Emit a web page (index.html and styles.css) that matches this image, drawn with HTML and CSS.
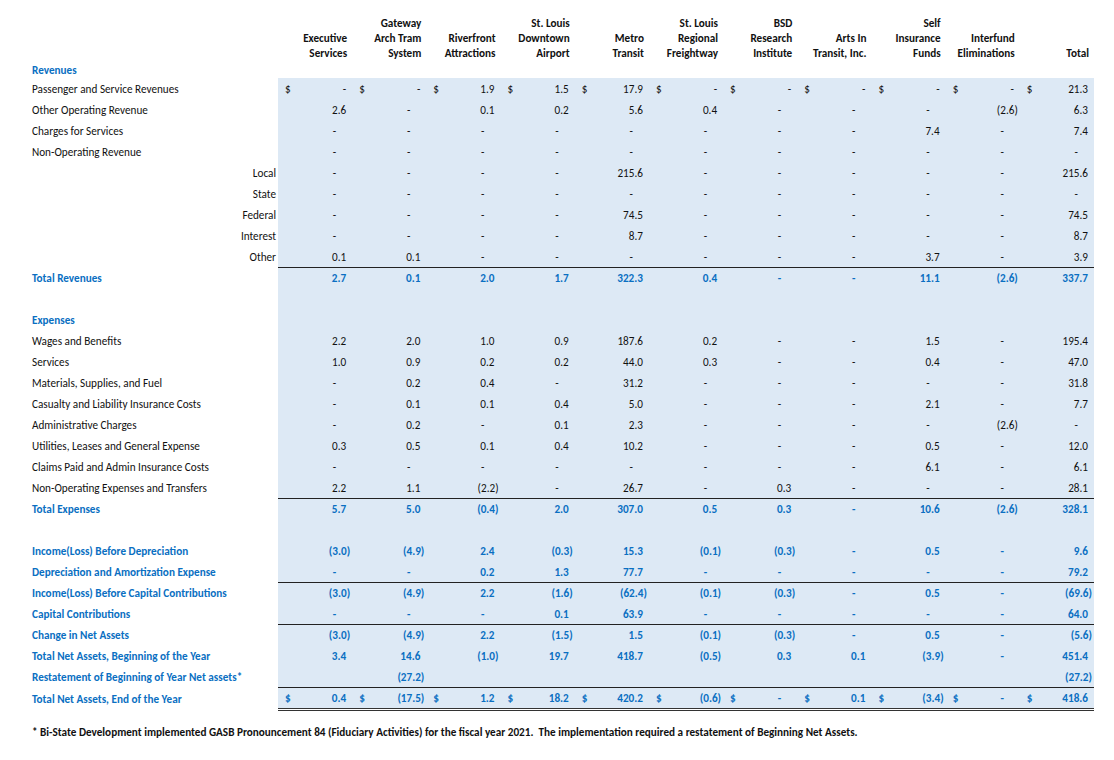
FILE: index.html
```html
<!DOCTYPE html>
<html>
<head>
<meta charset="utf-8">
<link rel="stylesheet" href="styles.css">
</head>
<body>
<div class="sheet">
  <div class="row hdr">
    <div></div>
    <div>Executive<br>Services</div>
    <div>Gateway<br>Arch Tram<br>System</div>
    <div>Riverfront<br>Attractions</div>
    <div>St. Louis<br>Downtown<br>Airport</div>
    <div>Metro<br>Transit</div>
    <div>St. Louis<br>Regional<br>Freightway</div>
    <div>BSD<br>Research<br>Institute</div>
    <div>Arts In<br>Transit, Inc.</div>
    <div>Self<br>Insurance<br>Funds</div>
    <div>Interfund<br>Eliminations</div>
    <div>Total</div>
  </div>

  <div class="row sec b">
    <div class="lab">Revenues</div>
    <div></div><div></div><div></div><div></div><div></div><div></div><div></div><div></div><div></div><div></div><div></div>
  </div>

  <div class="row">
    <div class="lab">Passenger and Service Revenues</div>
    <div class="v"><span class="d">$</span><span class="n">-</span></div>
    <div class="v"><span class="d">$</span><span class="n">-</span></div>
    <div class="v"><span class="d">$</span><span class="n">1.9</span></div>
    <div class="v"><span class="d">$</span><span class="n">1.5</span></div>
    <div class="v"><span class="d">$</span><span class="n">17.9</span></div>
    <div class="v"><span class="d">$</span><span class="n">-</span></div>
    <div class="v"><span class="d">$</span><span class="n">-</span></div>
    <div class="v"><span class="d">$</span><span class="n">-</span></div>
    <div class="v"><span class="d">$</span><span class="n">-</span></div>
    <div class="v"><span class="d">$</span><span class="n">-</span></div>
    <div class="v"><span class="d">$</span><span class="n">21.3</span></div>
  </div>

  <div class="row">
    <div class="lab">Other Operating Revenue</div>
    <div class="v"><span class="n">2.6</span></div>
    <div class="v"><span class="z">-</span></div>
    <div class="v"><span class="n">0.1</span></div>
    <div class="v"><span class="n">0.2</span></div>
    <div class="v"><span class="n">5.6</span></div>
    <div class="v"><span class="n">0.4</span></div>
    <div class="v"><span class="z">-</span></div>
    <div class="v"><span class="z">-</span></div>
    <div class="v"><span class="z">-</span></div>
    <div class="v"><span class="p">(2.6)</span></div>
    <div class="v"><span class="n">6.3</span></div>
  </div>

  <div class="row">
    <div class="lab">Charges for Services</div>
    <div class="v"><span class="z">-</span></div>
    <div class="v"><span class="z">-</span></div>
    <div class="v"><span class="z">-</span></div>
    <div class="v"><span class="z">-</span></div>
    <div class="v"><span class="z">-</span></div>
    <div class="v"><span class="z">-</span></div>
    <div class="v"><span class="z">-</span></div>
    <div class="v"><span class="z">-</span></div>
    <div class="v"><span class="n">7.4</span></div>
    <div class="v"><span class="z">-</span></div>
    <div class="v"><span class="n">7.4</span></div>
  </div>

  <div class="row">
    <div class="lab">Non-Operating Revenue</div>
    <div class="v"><span class="z">-</span></div>
    <div class="v"><span class="z">-</span></div>
    <div class="v"><span class="z">-</span></div>
    <div class="v"><span class="z">-</span></div>
    <div class="v"><span class="z">-</span></div>
    <div class="v"><span class="z">-</span></div>
    <div class="v"><span class="z">-</span></div>
    <div class="v"><span class="z">-</span></div>
    <div class="v"><span class="z">-</span></div>
    <div class="v"><span class="z">-</span></div>
    <div class="v"><span class="z">-</span></div>
  </div>

  <div class="row">
    <div class="lab sub">Local</div>
    <div class="v"><span class="z">-</span></div>
    <div class="v"><span class="z">-</span></div>
    <div class="v"><span class="z">-</span></div>
    <div class="v"><span class="z">-</span></div>
    <div class="v"><span class="n">215.6</span></div>
    <div class="v"><span class="z">-</span></div>
    <div class="v"><span class="z">-</span></div>
    <div class="v"><span class="z">-</span></div>
    <div class="v"><span class="z">-</span></div>
    <div class="v"><span class="z">-</span></div>
    <div class="v"><span class="n">215.6</span></div>
  </div>

  <div class="row">
    <div class="lab sub">State</div>
    <div class="v"><span class="z">-</span></div>
    <div class="v"><span class="z">-</span></div>
    <div class="v"><span class="z">-</span></div>
    <div class="v"><span class="z">-</span></div>
    <div class="v"><span class="z">-</span></div>
    <div class="v"><span class="z">-</span></div>
    <div class="v"><span class="z">-</span></div>
    <div class="v"><span class="z">-</span></div>
    <div class="v"><span class="z">-</span></div>
    <div class="v"><span class="z">-</span></div>
    <div class="v"><span class="z">-</span></div>
  </div>

  <div class="row">
    <div class="lab sub">Federal</div>
    <div class="v"><span class="z">-</span></div>
    <div class="v"><span class="z">-</span></div>
    <div class="v"><span class="z">-</span></div>
    <div class="v"><span class="z">-</span></div>
    <div class="v"><span class="n">74.5</span></div>
    <div class="v"><span class="z">-</span></div>
    <div class="v"><span class="z">-</span></div>
    <div class="v"><span class="z">-</span></div>
    <div class="v"><span class="z">-</span></div>
    <div class="v"><span class="z">-</span></div>
    <div class="v"><span class="n">74.5</span></div>
  </div>

  <div class="row">
    <div class="lab sub">Interest</div>
    <div class="v"><span class="z">-</span></div>
    <div class="v"><span class="z">-</span></div>
    <div class="v"><span class="z">-</span></div>
    <div class="v"><span class="z">-</span></div>
    <div class="v"><span class="n">8.7</span></div>
    <div class="v"><span class="z">-</span></div>
    <div class="v"><span class="z">-</span></div>
    <div class="v"><span class="z">-</span></div>
    <div class="v"><span class="z">-</span></div>
    <div class="v"><span class="z">-</span></div>
    <div class="v"><span class="n">8.7</span></div>
  </div>

  <div class="row">
    <div class="lab sub">Other</div>
    <div class="v"><span class="n">0.1</span></div>
    <div class="v"><span class="n">0.1</span></div>
    <div class="v"><span class="z">-</span></div>
    <div class="v"><span class="z">-</span></div>
    <div class="v"><span class="z">-</span></div>
    <div class="v"><span class="z">-</span></div>
    <div class="v"><span class="z">-</span></div>
    <div class="v"><span class="z">-</span></div>
    <div class="v"><span class="n">3.7</span></div>
    <div class="v"><span class="z">-</span></div>
    <div class="v"><span class="n">3.9</span></div>
  </div>

  <div class="row rule b">
    <div class="lab">Total Revenues</div>
    <div class="v"><span class="n">2.7</span></div>
    <div class="v"><span class="n">0.1</span></div>
    <div class="v"><span class="n">2.0</span></div>
    <div class="v"><span class="n">1.7</span></div>
    <div class="v"><span class="n">322.3</span></div>
    <div class="v"><span class="n">0.4</span></div>
    <div class="v"><span class="z">-</span></div>
    <div class="v"><span class="z">-</span></div>
    <div class="v"><span class="n">11.1</span></div>
    <div class="v"><span class="p">(2.6)</span></div>
    <div class="v"><span class="n">337.7</span></div>
  </div>

  <div class="row">
    <div class="lab"></div>
    <div class="v"></div><div class="v"></div><div class="v"></div><div class="v"></div><div class="v"></div><div class="v"></div><div class="v"></div><div class="v"></div><div class="v"></div><div class="v"></div><div class="v"></div>
  </div>

  <div class="row b">
    <div class="lab">Expenses</div>
    <div class="v"></div><div class="v"></div><div class="v"></div><div class="v"></div><div class="v"></div><div class="v"></div><div class="v"></div><div class="v"></div><div class="v"></div><div class="v"></div><div class="v"></div>
  </div>

  <div class="row">
    <div class="lab">Wages and Benefits</div>
    <div class="v"><span class="n">2.2</span></div>
    <div class="v"><span class="n">2.0</span></div>
    <div class="v"><span class="n">1.0</span></div>
    <div class="v"><span class="n">0.9</span></div>
    <div class="v"><span class="n">187.6</span></div>
    <div class="v"><span class="n">0.2</span></div>
    <div class="v"><span class="z">-</span></div>
    <div class="v"><span class="z">-</span></div>
    <div class="v"><span class="n">1.5</span></div>
    <div class="v"><span class="z">-</span></div>
    <div class="v"><span class="n">195.4</span></div>
  </div>

  <div class="row">
    <div class="lab">Services</div>
    <div class="v"><span class="n">1.0</span></div>
    <div class="v"><span class="n">0.9</span></div>
    <div class="v"><span class="n">0.2</span></div>
    <div class="v"><span class="n">0.2</span></div>
    <div class="v"><span class="n">44.0</span></div>
    <div class="v"><span class="n">0.3</span></div>
    <div class="v"><span class="z">-</span></div>
    <div class="v"><span class="z">-</span></div>
    <div class="v"><span class="n">0.4</span></div>
    <div class="v"><span class="z">-</span></div>
    <div class="v"><span class="n">47.0</span></div>
  </div>

  <div class="row">
    <div class="lab">Materials, Supplies, and Fuel</div>
    <div class="v"><span class="z">-</span></div>
    <div class="v"><span class="n">0.2</span></div>
    <div class="v"><span class="n">0.4</span></div>
    <div class="v"><span class="z">-</span></div>
    <div class="v"><span class="n">31.2</span></div>
    <div class="v"><span class="z">-</span></div>
    <div class="v"><span class="z">-</span></div>
    <div class="v"><span class="z">-</span></div>
    <div class="v"><span class="z">-</span></div>
    <div class="v"><span class="z">-</span></div>
    <div class="v"><span class="n">31.8</span></div>
  </div>

  <div class="row">
    <div class="lab">Casualty and Liability Insurance Costs</div>
    <div class="v"><span class="z">-</span></div>
    <div class="v"><span class="n">0.1</span></div>
    <div class="v"><span class="n">0.1</span></div>
    <div class="v"><span class="n">0.4</span></div>
    <div class="v"><span class="n">5.0</span></div>
    <div class="v"><span class="z">-</span></div>
    <div class="v"><span class="z">-</span></div>
    <div class="v"><span class="z">-</span></div>
    <div class="v"><span class="n">2.1</span></div>
    <div class="v"><span class="z">-</span></div>
    <div class="v"><span class="n">7.7</span></div>
  </div>

  <div class="row">
    <div class="lab">Administrative Charges</div>
    <div class="v"><span class="z">-</span></div>
    <div class="v"><span class="n">0.2</span></div>
    <div class="v"><span class="z">-</span></div>
    <div class="v"><span class="n">0.1</span></div>
    <div class="v"><span class="n">2.3</span></div>
    <div class="v"><span class="z">-</span></div>
    <div class="v"><span class="z">-</span></div>
    <div class="v"><span class="z">-</span></div>
    <div class="v"><span class="z">-</span></div>
    <div class="v"><span class="p">(2.6)</span></div>
    <div class="v"><span class="z">-</span></div>
  </div>

  <div class="row">
    <div class="lab">Utilities, Leases and General Expense</div>
    <div class="v"><span class="n">0.3</span></div>
    <div class="v"><span class="n">0.5</span></div>
    <div class="v"><span class="n">0.1</span></div>
    <div class="v"><span class="n">0.4</span></div>
    <div class="v"><span class="n">10.2</span></div>
    <div class="v"><span class="z">-</span></div>
    <div class="v"><span class="z">-</span></div>
    <div class="v"><span class="z">-</span></div>
    <div class="v"><span class="n">0.5</span></div>
    <div class="v"><span class="z">-</span></div>
    <div class="v"><span class="n">12.0</span></div>
  </div>

  <div class="row">
    <div class="lab">Claims Paid and Admin Insurance Costs</div>
    <div class="v"><span class="z">-</span></div>
    <div class="v"><span class="z">-</span></div>
    <div class="v"><span class="z">-</span></div>
    <div class="v"><span class="z">-</span></div>
    <div class="v"><span class="z">-</span></div>
    <div class="v"><span class="z">-</span></div>
    <div class="v"><span class="z">-</span></div>
    <div class="v"><span class="z">-</span></div>
    <div class="v"><span class="n">6.1</span></div>
    <div class="v"><span class="z">-</span></div>
    <div class="v"><span class="n">6.1</span></div>
  </div>

  <div class="row">
    <div class="lab">Non-Operating Expenses and Transfers</div>
    <div class="v"><span class="n">2.2</span></div>
    <div class="v"><span class="n">1.1</span></div>
    <div class="v"><span class="p">(2.2)</span></div>
    <div class="v"><span class="z">-</span></div>
    <div class="v"><span class="n">26.7</span></div>
    <div class="v"><span class="z">-</span></div>
    <div class="v"><span class="n">0.3</span></div>
    <div class="v"><span class="z">-</span></div>
    <div class="v"><span class="z">-</span></div>
    <div class="v"><span class="z">-</span></div>
    <div class="v"><span class="n">28.1</span></div>
  </div>

  <div class="row rule b">
    <div class="lab">Total Expenses</div>
    <div class="v"><span class="n">5.7</span></div>
    <div class="v"><span class="n">5.0</span></div>
    <div class="v"><span class="p">(0.4)</span></div>
    <div class="v"><span class="n">2.0</span></div>
    <div class="v"><span class="n">307.0</span></div>
    <div class="v"><span class="n">0.5</span></div>
    <div class="v"><span class="n">0.3</span></div>
    <div class="v"><span class="z">-</span></div>
    <div class="v"><span class="n">10.6</span></div>
    <div class="v"><span class="p">(2.6)</span></div>
    <div class="v"><span class="n">328.1</span></div>
  </div>

  <div class="row">
    <div class="lab"></div>
    <div class="v"></div><div class="v"></div><div class="v"></div><div class="v"></div><div class="v"></div><div class="v"></div><div class="v"></div><div class="v"></div><div class="v"></div><div class="v"></div><div class="v"></div>
  </div>

  <div class="row b">
    <div class="lab">Income(Loss) Before Depreciation</div>
    <div class="v"><span class="p">(3.0)</span></div>
    <div class="v"><span class="p">(4.9)</span></div>
    <div class="v"><span class="n">2.4</span></div>
    <div class="v"><span class="p">(0.3)</span></div>
    <div class="v"><span class="n">15.3</span></div>
    <div class="v"><span class="p">(0.1)</span></div>
    <div class="v"><span class="p">(0.3)</span></div>
    <div class="v"><span class="z">-</span></div>
    <div class="v"><span class="n">0.5</span></div>
    <div class="v"><span class="z">-</span></div>
    <div class="v"><span class="n">9.6</span></div>
  </div>

  <div class="row b">
    <div class="lab">Depreciation and Amortization Expense</div>
    <div class="v"><span class="z">-</span></div>
    <div class="v"><span class="z">-</span></div>
    <div class="v"><span class="n">0.2</span></div>
    <div class="v"><span class="n">1.3</span></div>
    <div class="v"><span class="n">77.7</span></div>
    <div class="v"><span class="z">-</span></div>
    <div class="v"><span class="z">-</span></div>
    <div class="v"><span class="z">-</span></div>
    <div class="v"><span class="z">-</span></div>
    <div class="v"><span class="z">-</span></div>
    <div class="v"><span class="n">79.2</span></div>
  </div>

  <div class="row rule b">
    <div class="lab">Income(Loss) Before Capital Contributions</div>
    <div class="v"><span class="p">(3.0)</span></div>
    <div class="v"><span class="p">(4.9)</span></div>
    <div class="v"><span class="n">2.2</span></div>
    <div class="v"><span class="p">(1.6)</span></div>
    <div class="v"><span class="p">(62.4)</span></div>
    <div class="v"><span class="p">(0.1)</span></div>
    <div class="v"><span class="p">(0.3)</span></div>
    <div class="v"><span class="z">-</span></div>
    <div class="v"><span class="n">0.5</span></div>
    <div class="v"><span class="z">-</span></div>
    <div class="v"><span class="p">(69.6)</span></div>
  </div>

  <div class="row b">
    <div class="lab">Capital Contributions</div>
    <div class="v"><span class="z">-</span></div>
    <div class="v"><span class="z">-</span></div>
    <div class="v"><span class="z">-</span></div>
    <div class="v"><span class="n">0.1</span></div>
    <div class="v"><span class="n">63.9</span></div>
    <div class="v"><span class="z">-</span></div>
    <div class="v"><span class="z">-</span></div>
    <div class="v"><span class="z">-</span></div>
    <div class="v"><span class="z">-</span></div>
    <div class="v"><span class="z">-</span></div>
    <div class="v"><span class="n">64.0</span></div>
  </div>

  <div class="row rule b">
    <div class="lab">Change in Net Assets</div>
    <div class="v"><span class="p">(3.0)</span></div>
    <div class="v"><span class="p">(4.9)</span></div>
    <div class="v"><span class="n">2.2</span></div>
    <div class="v"><span class="p">(1.5)</span></div>
    <div class="v"><span class="n">1.5</span></div>
    <div class="v"><span class="p">(0.1)</span></div>
    <div class="v"><span class="p">(0.3)</span></div>
    <div class="v"><span class="z">-</span></div>
    <div class="v"><span class="n">0.5</span></div>
    <div class="v"><span class="z">-</span></div>
    <div class="v"><span class="p">(5.6)</span></div>
  </div>

  <div class="row b">
    <div class="lab">Total Net Assets, Beginning of the Year</div>
    <div class="v"><span class="n">3.4</span></div>
    <div class="v"><span class="n">14.6</span></div>
    <div class="v"><span class="p">(1.0)</span></div>
    <div class="v"><span class="n">19.7</span></div>
    <div class="v"><span class="n">418.7</span></div>
    <div class="v"><span class="p">(0.5)</span></div>
    <div class="v"><span class="n">0.3</span></div>
    <div class="v"><span class="n">0.1</span></div>
    <div class="v"><span class="p">(3.9)</span></div>
    <div class="v"><span class="z">-</span></div>
    <div class="v"><span class="n">451.4</span></div>
  </div>

  <div class="row b">
    <div class="lab">Restatement of Beginning of Year Net assets*</div>
    <div class="v"></div>
    <div class="v"><span class="p">(27.2)</span></div>
    <div class="v"></div>
    <div class="v"></div>
    <div class="v"></div>
    <div class="v"></div>
    <div class="v"></div>
    <div class="v"></div>
    <div class="v"></div>
    <div class="v"></div>
    <div class="v"><span class="p">(27.2)</span></div>
  </div>

  <div class="row rule last b">
    <div class="lab">Total Net Assets, End of the Year</div>
    <div class="v"><span class="d">$</span><span class="n">0.4</span></div>
    <div class="v"><span class="d">$</span><span class="p">(17.5)</span></div>
    <div class="v"><span class="d">$</span><span class="n">1.2</span></div>
    <div class="v"><span class="d">$</span><span class="n">18.2</span></div>
    <div class="v"><span class="d">$</span><span class="n">420.2</span></div>
    <div class="v"><span class="d">$</span><span class="p">(0.6)</span></div>
    <div class="v"><span class="d">$</span><span class="z">-</span></div>
    <div class="v"><span class="d">$</span><span class="n">0.1</span></div>
    <div class="v"><span class="d">$</span><span class="p">(3.4)</span></div>
    <div class="v"><span class="d">$</span><span class="z">-</span></div>
    <div class="v"><span class="d">$</span><span class="n">418.6</span></div>
  </div>

  <p class="note">* Bi-State Development implemented GASB Pronouncement 84 (Fiduciary Activities) for the fiscal year 2021.&nbsp; The implementation required a restatement of Beginning Net Assets.</p>
</div>
</body>
</html>
```
FILE: styles.css
```css
html, body {
  margin: 0;
  padding: 0;
  background: #ffffff;
}

body {
  font-family: Carlito, Lato, "Liberation Sans", sans-serif;
  font-size: 11.2px;
  color: #111111;
}

.sheet {
  margin-left: 32px;
  width: 1062px;
  padding-top: 16px;
}

.row {
  display: grid;
  grid-template-columns: 246px repeat(11, 1fr);
  height: 21px;
}

.hdr {
  height: 45px;
  line-height: 15px;
  font-weight: bold;
}

.hdr > div {
  text-align: right;
  padding-right: 5px;
  align-self: end;
}

.sec {
  height: 17px;
}

.lab {
  display: flex;
  align-items: center;
  white-space: nowrap;
}

.lab.sub {
  justify-content: flex-end;
  padding-right: 2px;
}

.v {
  background: #dde9f5;
  display: flex;
  align-items: center;
  justify-content: flex-end;
  padding-right: 2px;
  box-sizing: border-box;
  white-space: nowrap;
}

.d {
  margin-right: auto;
  padding-left: 7px;
}

.n {
  padding-right: 4px;
}

.p {
  padding-right: 0;
}

.z {
  padding-right: 14px;
}

.b {
  color: #0a6fc2;
  font-weight: bold;
}

.rule > .v {
  border-top: 1px solid #222222;
}

.last {
  height: 24px;
}

.last > .v {
  border-bottom: 3px double #333333;
  background-clip: padding-box;
}

.note {
  margin: 14px 0 0 0;
  font-weight: bold;
  color: #111111;
}
```
